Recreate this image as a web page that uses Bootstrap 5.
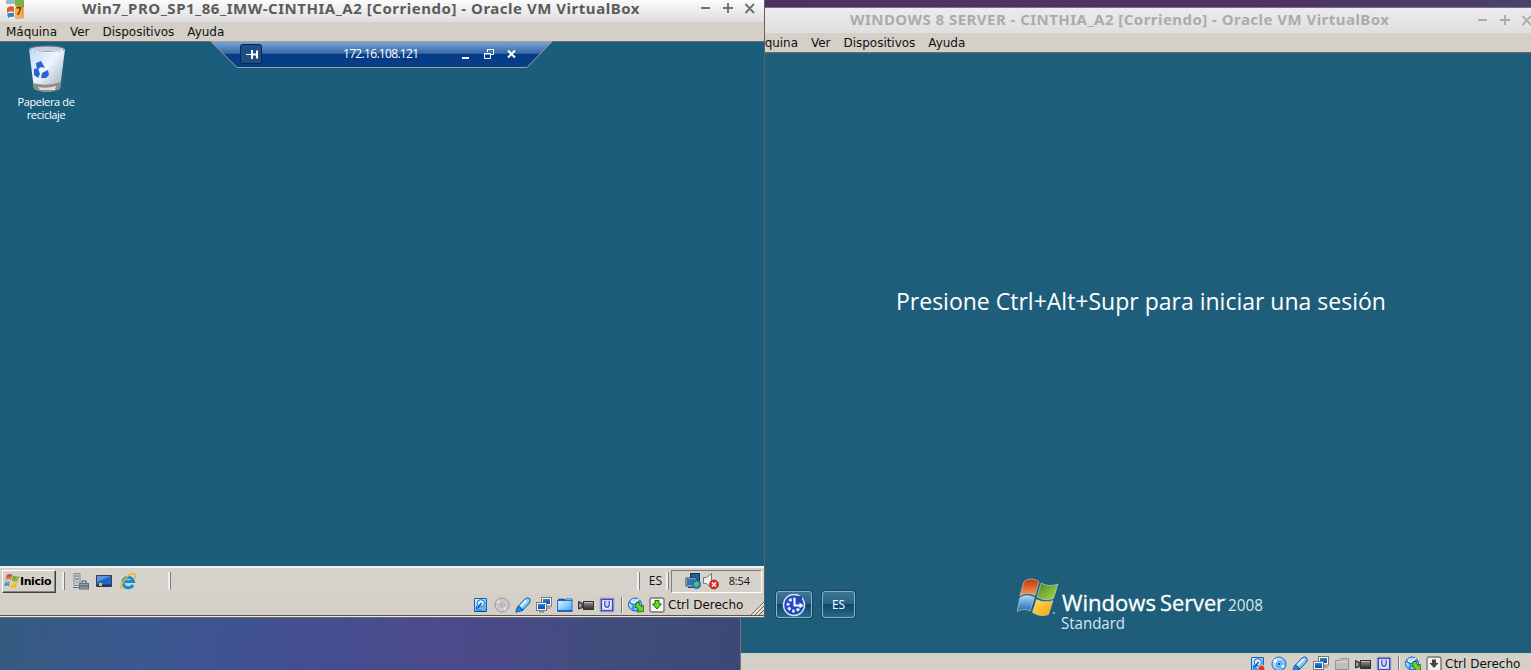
<!DOCTYPE html>
<html lang="es">
<head>
<meta charset="utf-8">
<meta name="viewport" content="width=device-width, initial-scale=1">
<title>Oracle VM VirtualBox</title>
<link href="https://cdn.jsdelivr.net/npm/bootstrap@5.3.0/dist/css/bootstrap.min.css" rel="stylesheet">
<style>
body{margin:0;font-family:"DejaVu Sans",sans-serif;font-size:12px;line-height:1;color:#111}
svg{display:block;flex:none}
.desk{width:1531px;height:670px;background:linear-gradient(90deg,#503062 50%,#4f3264 83%,#4a416c 100%)}
.wall{left:0;top:618px;width:740px;height:52px;background:linear-gradient(97deg,#355b80 0,#3b5890 20%,#424f91 38%,#4c4a8b 60%,#484a86 70%,#414d7d 80%,#3c4875 100%)}
.win{position:absolute;overflow:hidden;background:#d4d0c8}
.win-l{left:0;top:0;width:765px;height:618px;border-right:1px solid #606060;z-index:2}
.win-r{left:740px;top:7px;width:791px;height:663px;border-left:1px solid #777;border-top:1px solid #77737d}
.titlebar{font-family:"Noto Sans",sans-serif;font-weight:700;font-size:15px;letter-spacing:.52px;white-space:nowrap;color:#5c5c5c;background:linear-gradient(#fbfbfb,#dedede)}
.win-l .titlebar{height:22px}
.win-r .titlebar{height:25px;letter-spacing:.46px;color:#ababab;background:linear-gradient(#ececec,#dfdfdf)}
.menus{height:20px;gap:13px;letter-spacing:-.03px;border-bottom:1px solid #6d6b67;background:#d4d0c8;white-space:nowrap}
.win-l .screen{height:524px;background:#1a5e7b}
.win-r .screen{height:600px;background:#1e5e7a;border-top:1px solid #236682}
.tahoma{font-family:"Open Sans",sans-serif}
.bin{left:7px;top:3px;width:78px;color:#fff;font-size:11px;line-height:13px;letter-spacing:-.35px}
.rdp{left:210px;top:-1px;width:343px;height:28px}
.rdp-in{height:26px;color:#fff}
.task{height:28px;border-top:2px solid #f2f0ee;background:#d5d2cc}
.start{width:54px;height:23px;border:1px solid;border-color:#fff #404040 #404040 #fff;box-shadow:inset -1px -1px #848484;font:700 11px "DejaVu Sans",sans-serif;color:#000;background:#d4d1cb}
.bar{width:3px;height:18px;background:#efeeeb;border-right:1px solid #808080}
.tray{width:91px;height:23px;border:1px solid;border-color:#808080 #fff #fff #808080;font-size:11px}
.status{height:21px;background:#d4d0c8}
.stsep{width:2px;height:16px;margin-left:1px;border-left:1px solid #777;background:#eee}
.gap5{gap:5px}
.frame{height:3px;border-top:1px solid #555;border-bottom:1px solid #666;background:#e8e6e2}
.greet{color:#fff;font-size:23px;white-space:nowrap}
.lbtn{height:27px;border:1px solid #88b4ca;border-radius:3px;background:linear-gradient(#3b7592 0,#276384 48%,#104470 50%,#226c8d 100%);box-shadow:0 0 0 1px #164659;color:#fff;font-size:12px}
</style>
</head>
<body>
<svg width="0" height="0" class="position-absolute">
<defs>
<linearGradient id="gb" x1="0" y1="0" x2="1" y2="1"><stop offset="0" stop-color="#e2f6ff"/><stop offset="1" stop-color="#3fa4f2"/></linearGradient>
<linearGradient id="gs" x1="0" y1="0" x2="0" y2="1"><stop offset="0" stop-color="#2a7fe0"/><stop offset="1" stop-color="#0a48ac"/></linearGradient>
<linearGradient id="gd" x1="0" y1="0" x2="0" y2="1"><stop offset="0" stop-color="#999"/><stop offset="1" stop-color="#2a2a2a"/></linearGradient>
<linearGradient id="fr" x1="0" y1="0" x2="0" y2="1"><stop offset="0" stop-color="#c8300c"/><stop offset="1" stop-color="#f79a50"/></linearGradient>
<linearGradient id="fg" x1="0" y1="0" x2="1" y2="1"><stop offset="0" stop-color="#3f8a20"/><stop offset="1" stop-color="#b5da4e"/></linearGradient>
<linearGradient id="fb" x1="0" y1="0" x2="0" y2="1"><stop offset="0" stop-color="#a8d8f2"/><stop offset="1" stop-color="#2164b4"/></linearGradient>
<linearGradient id="fy" x1="0" y1="0" x2="1" y2="1"><stop offset="0" stop-color="#ffe060"/><stop offset="1" stop-color="#f5a000"/></linearGradient>
<linearGradient id="rd" x1="0" y1="0" x2="0" y2="1"><stop offset="0" stop-color="#7ba6d6"/><stop offset=".46" stop-color="#3568a8"/><stop offset=".47" stop-color="#063b83"/><stop offset="1" stop-color="#093f8b"/></linearGradient>
<linearGradient id="bn" x1="0" y1="0" x2="1" y2="1"><stop offset="0" stop-color="#bcd8f8"/><stop offset=".45" stop-color="#edf5ff"/><stop offset="1" stop-color="#9aa3ad"/></linearGradient>
<symbol id="hdd" viewBox="0 0 16 16"><rect x="1.500" y="1.500" width="12" height="13" rx=".5" fill="url(#gb)" stroke="#0d62c0"/><path d="M1.500 14.500h12" stroke="#0848a0"/><circle cx="7.800" cy="6.300" r="3.600" fill="#d9f1ff" stroke="#1668c6"/><path d="M8.500 6L4.500 11.500" stroke="#0a56b4" stroke-width="1.500"/><path d="M3.500 9v4h5" fill="none" stroke="#1668c6"/></symbol>
<symbol id="cdg" viewBox="0 0 16 16"><circle cx="8" cy="8" r="7" fill="#cbcbc9" stroke="#979797"/><path d="M8 8L3 4M8 8l4 5" stroke="#e2e2e2" stroke-width="2"/><circle cx="8" cy="8" r="2.500" fill="#ddd" stroke="#a4a4a4"/><circle cx="8" cy="8" r="1" fill="#888"/></symbol>
<symbol id="cdb" viewBox="0 0 16 16"><circle cx="8" cy="8" r="7" fill="url(#gb)" stroke="#1e6dc4"/><path d="M8 8L3 4M8 8l5 3" stroke="#fff" stroke-width="2.500"/><circle cx="8" cy="8" r="2.600" fill="#9bd3fb" stroke="#4696e0"/><circle cx="8" cy="8" r="1.200" fill="#1d55a8"/></symbol>
<symbol id="usb" viewBox="0 0 16 16"><path d="M3.500 9L10 2q3-2 4.500-.5T14.500 6L8 13z" fill="url(#gb)" stroke="#1259ad"/><path d="M3 9l5 4.500-4 1L.8 15.300 1.500 12z" fill="#2385e4" stroke="#0a4fa5" stroke-width=".8"/><path d="M6 9l5.500-5.500" stroke="#fff" stroke-width="1.600"/></symbol>
<symbol id="net" viewBox="0 0 16 16"><rect x="5.500" y=".5" width="10" height="8.500" fill="#fafafa" stroke="#777"/><rect x="7" y="2" width="7" height="5" fill="url(#gs)"/><path d="M10.500 11h4" stroke="#777"/><rect x=".5" y="5.500" width="10" height="8" fill="#fafafa" stroke="#777"/><rect x="2" y="7" width="7" height="5" fill="url(#gs)"/><path d="M3 15h5" stroke="#666"/></symbol>
<symbol id="fld" viewBox="0 0 16 16"><path d="M8 4l1-2h6v3H8z" fill="#eef8ff" stroke="#1a6cc8"/><path d="M.5 14V3.500h14.500v10.500z" fill="url(#gb)" stroke="#1c74d0"/><path d="M1 4l1-1.500h5L8 4M.5 14h15" fill="none" stroke="#0c50b0" stroke-width="1.300"/></symbol>
<symbol id="flg" viewBox="0 0 16 16"><path d="M1.500 13.500v-9h4.500l1-2h7.500v11z" fill="#c0beba" stroke="#979591"/><path d="M2 6h12" stroke="#ddd"/></symbol>
<symbol id="cam" viewBox="0 0 16 16"><rect x="5.500" y="4.500" width="10" height="8" fill="url(#gd)" stroke="#333"/><path d="M.5 4.500L5 6.500v4L.5 12z" fill="#666" stroke="#333"/><path d="M6 5.500h9" stroke="#bbb"/><path d="M2 7v3" stroke="#ddd"/></symbol>
<symbol id="cpu" viewBox="0 0 16 16"><rect x="1.500" y="1.500" width="13" height="13" fill="none" stroke="#4a52bd" stroke-width="1.600" stroke-dasharray="1 1"/><rect x="2.500" y="2.500" width="11" height="11" fill="#cbd2f8" stroke="#3d47bb"/><path d="M5.500 4v3.500q0 3 2.500 3t2.500-3V4" fill="none" stroke="#f8faff" stroke-width="2.800"/><path d="M5.800 4v3.500q0 2.700 2.200 2.700t2.200-2.700V4" fill="none" stroke="#3942b7" stroke-width="1.300"/></symbol>
<symbol id="mouse" viewBox="0 0 16 16"><circle cx="7" cy="7.500" r="6.500" fill="url(#gb)" stroke="#1560ba"/><path d="M1.500 5l4 3 6-5M4 13l2-4" fill="none" stroke="#2a8be4" stroke-width="2"/><path d="M3 5l3.500 1L11 2" fill="none" stroke="#fff" stroke-width="1.300"/><path d="M8 5.500h4l-1.200 1.200 2.500 3 1.900-1.700.3 6.500-6.500.5 1.800-1.900-2.500-3L7.500 11z" fill="#6bd42b" stroke="#2a6a10" stroke-width=".9"/></symbol>
<symbol id="dng" viewBox="0 0 16 16"><rect x="1" y="1" width="14" height="14" rx="2" fill="#f7f7f4" stroke="#777" stroke-width="1.400"/><path d="M6 3.500h4V7h2.500L8 12 3.500 7H6z" fill="#5fe01a" stroke="#187009"/></symbol>
<symbol id="dnk" viewBox="0 0 16 16"><rect x="1" y="1" width="14" height="14" rx="2" fill="#f1f0ed" stroke="#777" stroke-width="1.400"/><path d="M6 3.500h4V7h2.500L8 12 3.500 7H6z" fill="#444"/></symbol>
<symbol id="flag" viewBox="0 0 42 38"><path d="M7 3Q14-2 22 3L18 17Q11 13 3 17z" fill="url(#fr)" stroke="#c9d8d8" stroke-width=".6"/><path d="M24 4.500q8 4.500 17 1l-4.500 14.500q-8 3.500-16.500-1.500z" fill="url(#fg)" stroke="#c9d8d8" stroke-width=".6"/><path d="M3 19q7-4 14.500 0L13 32.500Q7 29 0 33z" fill="url(#fb)" stroke="#c9d8d8" stroke-width=".6"/><path d="M19.500 21q8 4 16.500 1l-4.500 14q-8 3-16-2z" fill="url(#fy)" stroke="#c9d8d8" stroke-width=".6"/></symbol>
<symbol id="wc" viewBox="0 0 60 12"><path d="M2 6h9M24 6h10M29 1v10M46.500 2l8.500 9M55 2l-8.500 9" fill="none" stroke="currentColor" stroke-width="1.900"/></symbol>
</defs>
</svg>
<div class="desk position-relative overflow-hidden">
<div class="wall position-absolute"></div>

<section class="win win-r">
 <div class="titlebar d-flex align-items-center"><span style="margin:-2px 0 0 109px">WINDOWS 8 SERVER - CINTHIA_A2 [Corriendo] - Oracle VM VirtualBox</span><svg class="ms-auto" style="margin:-2px -5px 0 0" width="60" height="12"><use href="#wc"/></svg></div>
 <nav class="menus d-flex align-items-center" style="padding-left:6px"><span>Máquina</span><span>Ver</span><span>Dispositivos</span><span>Ayuda</span></nav>
 <div class="screen d-flex flex-column tahoma">
  <div class="greet" style="padding:236px 0 0 155px"><span>Presione Ctrl+Alt+Supr para iniciar una sesión</span></div>
  <div class="d-flex mt-auto" style="padding:0 0 16px 34px">
   <div class="d-flex align-items-end" style="gap:10px;padding-bottom:19px;margin-left:1px">
    <div class="lbtn d-flex align-items-center justify-content-center" style="width:36px"><svg width="24" height="24" viewBox="0 0 24 24"><circle cx="12" cy="12" r="10.500" fill="#2247bd" stroke="#d5dfec" stroke-width="1.500"/><circle cx="12" cy="12" r="6" fill="none" stroke="#e4ecff" stroke-width="3" stroke-dasharray="2.700 2" stroke-dashoffset="1"/><path d="M13 3h7v8h-7z" fill="#2247bd"/><path d="M12.500 5v7.500H19" fill="none" stroke="#fff" stroke-width="2"/><path d="M17.500 9.500l4 3-4 3" fill="#fff"/></svg></div>
    <div class="lbtn d-flex align-items-center justify-content-center" style="width:33px">ES</div>
   </div>
   <svg style="margin-left:162px" width="250" height="60" viewBox="0 0 250 60"><use href="#flag" x="0" y="1" width="42" height="39"/><g fill="#fff" font-family="Open Sans, sans-serif"><text x="45" y="34" font-size="22" textLength="94" lengthAdjust="spacingAndGlyphs" stroke="#fff" stroke-width=".3">Windows</text><text x="143" y="34" font-size="22" textLength="65" lengthAdjust="spacingAndGlyphs" stroke="#fff" stroke-width=".3">Server</text><text x="211" y="34" font-size="17" fill="#dbe7ed" textLength="35" lengthAdjust="spacingAndGlyphs">2008</text><text x="44" y="52" font-size="16" fill="#dbe7ed" textLength="64" lengthAdjust="spacingAndGlyphs">Standard</text></g><circle cx="37" cy="36" r="1" fill="#9fc0d0"/><circle cx="208.500" cy="22" r=".8" fill="#9fc0d0"/></svg>
  </div>
 </div>
 <div class="status d-flex align-items-center gap5" style="padding-left:509px">
  <svg width="16" height="16" overflow="visible"><use href="#hdd"/><circle cx="11.500" cy="12.500" r="3.500" fill="#d83a25" stroke="#fff" stroke-width=".7"/></svg><svg width="16" height="16"><use href="#cdb"/></svg><svg width="16" height="16"><use href="#usb"/></svg><svg width="16" height="16"><use href="#net"/></svg><svg width="16" height="16"><use href="#flg"/></svg><svg width="16" height="16"><use href="#cam"/></svg><svg width="16" height="16"><use href="#cpu"/></svg><span class="stsep"></span><svg width="16" height="16"><use href="#mouse"/></svg><svg width="16" height="16"><use href="#dnk"/></svg><span style="margin-left:-2px">Ctrl Derecho</span>
 </div>
</section>

<section class="win win-l">
 <div class="titlebar d-flex align-items-center"><svg style="margin:-4px 0 0 6px" width="18" height="20" viewBox="0 0 18 20"><rect width="18" height="19.500" rx="1.500" fill="#f3f0e7"/><path d="M0 0h9v5H0z" fill="#9cbccb"/><path d="M1 9q3-3 7-1v5q-4-2-7 1z" fill="#de5a38"/><path d="M1 15q3-2 7-1v4q-3-1-6 1z" fill="#3086cf"/><path d="M9 1h9v7q-4 2-9-1z" fill="#79b740"/><path d="M9 9h8v9H9z" fill="#f5b341"/><path d="M17 5v14H9" fill="none" stroke="#e26832"/><text x="10" y="16" font-size="10" letter-spacing="0" font-weight="700" fill="#972b18">7</text></svg><span style="margin:-6px 0 0 58px">Win7_PRO_SP1_86_IMW-CINTHIA_A2 [Corriendo] - Oracle VM VirtualBox</span><svg class="ms-auto" style="margin:-6px 5px 0 0;color:#707070" width="60" height="12"><use href="#wc"/></svg></div>
 <nav class="menus d-flex align-items-center" style="padding-left:6px"><span>Máquina</span><span>Ver</span><span>Dispositivos</span><span>Ayuda</span></nav>
 <div class="screen position-relative tahoma">
  <div class="bin position-absolute text-center"><svg style="margin-left:21px" width="38" height="48" viewBox="0 0 38 48"><path d="M1 4l5 40q13 6 26 0l5-40z" fill="url(#bn)"/><path d="M5 38l1 6q13 6 26 0l1-7q-14 5-28 1z" fill="#8d8d8d"/><path d="M10 42q9 2 18-1l-1 4H12z" fill="#dedede"/><ellipse cx="19" cy="4" rx="17.500" ry="3" fill="#c3cfe0" stroke="#687789"/><path d="M3 5q16 5 32 0" stroke="#fff" fill="none"/><path d="M8 18l5-2 4 7-4-1-4 3zM6 24l4-1 2 6-2 4-4-3zM14 28l6-3 1 5-3 3h-5z" fill="#2664d0"/></svg><div style="margin-top:2px">Papelera de<br>reciclaje</div></div>
  <div class="rdp position-absolute"><svg class="position-absolute" width="343" height="28" viewBox="0 0 343 28"><path d="M1 .5l26 26h290l25-26z" fill="url(#rd)" stroke="#a0a0a8" stroke-width="1"/></svg>
   <div class="rdp-in position-relative d-flex align-items-center"><svg style="margin-left:30px" width="22" height="20" viewBox="0 0 22 20"><rect x=".5" y=".5" width="21" height="19" rx="2" fill="#1b4f86" stroke="#0b2748"/><path d="M6 10.500h6" stroke="#fff"/><path d="M12 6v9M12 10.500h5M17 6.500v8" stroke="#fff" stroke-width="2" fill="none"/></svg><span style="margin-left:81px;letter-spacing:-.68px">172.16.108.121</span><svg class="ms-auto" style="margin-right:35px" width="56" height="12" viewBox="0 0 56 12" fill="none" stroke="#fff"><path d="M0 10h7" stroke-width="2"/><path d="M25.500 4V1.500h6v5H29"/><path d="M22.500 5.500h6v5h-6zM22 6h7M25 1.500h7"/><path d="M46 2.500l7 7M53 2.500l-7 7" stroke-width="2"/></svg></div>
  </div>
 </div>
 <div class="task d-flex align-items-center">
  <div class="start d-flex align-items-center" style="margin-left:2px"><svg style="margin-left:1px" width="16" height="16"><use href="#flag"/></svg><span style="margin-left:0;letter-spacing:-.4px">Inicio</span></div>
  <span class="bar" style="margin-left:6px"></span>
  <svg style="margin-left:8px" width="17" height="17" viewBox="0 0 17 17"><path d="M1 .5h6v12H1z" fill="#c5ced3" stroke="#889"/><path d="M2 3h4M2 6h4M0 14.500h8" stroke="#668"/><path d="M3 9h2" stroke="#50a060"/><rect x="6.500" y="10.500" width="9" height="5.500" fill="#8c9dab" stroke="#60707c"/><path d="M9 10V8h4v2M7 13h9" fill="none" stroke="#44525c"/></svg>
  <svg style="margin-left:6px" width="16" height="14" viewBox="0 0 16 14"><path d="M.5 1.500h15v11H.5z" fill="#2066c9" stroke="#344258"/><path d="M1 2h14L1 8z" fill="#5794df"/><path d="M1 10.500h14v2H1z" fill="#25304c"/><path d="M3 9h3v3H3z" fill="#d8c04a"/></svg>
  <svg style="margin-left:8px" width="16" height="17" viewBox="0 0 16 17"><path d="M13 12A5.300 5.300 0 1 1 13.500 8.500H4" fill="none" stroke="#168ad6" stroke-width="3"/><path d="M2 16C-2 14 8-1 14.500 1q1.500 1 0 4" fill="none" stroke="#f2b422" stroke-width="1.700"/></svg>
  <span class="bar" style="margin-left:32px"></span>
  <span class="bar ms-auto"></span><span class="tahoma" style="margin:0 4px 0 9px">ES</span><span class="bar"></span>
  <div class="tray d-flex align-items-center" style="margin:0 2px 0 2px"><svg style="margin-left:13px" width="35" height="17" viewBox="0 0 35 17"><rect x="5.500" y=".5" width="9" height="8" fill="#1e639c" stroke="#17344f"/><rect x="1.500" y="5.500" width="9" height="7" fill="#2d78b5" stroke="#eee"/><path d="M1 5h10v8H1zM3 14.500h6" fill="none" stroke="#244362"/><circle cx="11.500" cy="11.500" r="4" fill="#288ddd" stroke="#195ba0"/><path d="M9 10l3-2 2 3-3 3z" fill="#50c750"/><path d="M18.500 4.500h3l5-4v15l-5-5h-3z" fill="#eee" stroke="#777"/><circle cx="29" cy="11.500" r="4.500" fill="#da3129" stroke="#a51b18" stroke-width=".7"/><path d="M27 9.500l4 4M31 9.500l-4 4" stroke="#fff" stroke-width="1.400"/></svg><span class="ms-auto tahoma" style="margin:-2px 11px 0 0;letter-spacing:-.1px">8:54</span></div>
 </div>
 <div class="status position-relative d-flex align-items-center gap5" style="padding-left:473px">
  <svg width="16" height="16"><use href="#hdd"/></svg><svg width="16" height="16"><use href="#cdg"/></svg><svg width="16" height="16"><use href="#usb"/></svg><svg width="16" height="16"><use href="#net"/></svg><svg width="16" height="16"><use href="#fld"/></svg><svg width="16" height="16"><use href="#cam"/></svg><svg width="16" height="16"><use href="#cpu"/></svg><span class="stsep"></span><svg width="16" height="16"><use href="#mouse"/></svg><svg width="16" height="16"><use href="#dng"/></svg><span style="margin-left:-2px">Ctrl Derecho</span>
  <svg class="position-absolute end-0 bottom-0" width="13" height="13" viewBox="0 0 13 13" stroke="#666"><path d="M0 13L13 0M4 13l9-9M8 13l5-5"/><path d="M1.500 13L13 1.500M5.500 13L13 5.500" stroke="#fff"/></svg>
 </div>
 <div class="frame"></div>
</section>
</div>
<script src="https://cdn.jsdelivr.net/npm/bootstrap@5.3.0/dist/js/bootstrap.bundle.min.js"></script>
</body>
</html>
